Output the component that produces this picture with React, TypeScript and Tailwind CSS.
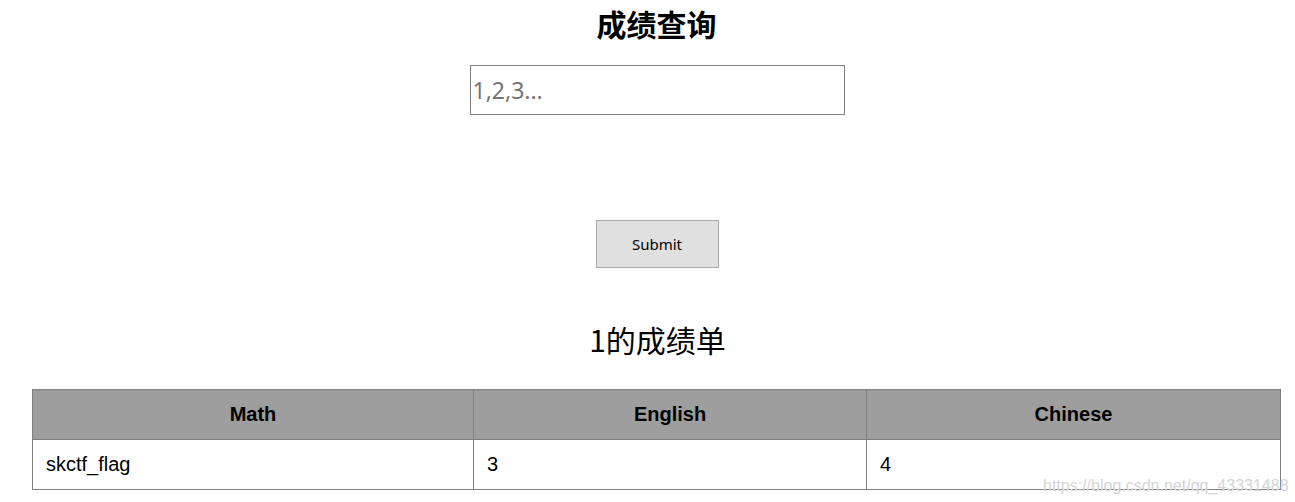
export default function App() {
  return (
    <div className="relative w-[1295px] h-[502px] bg-white overflow-hidden">
      <div className="flex flex-col items-center pl-[32px] pr-[14px]">
        <h1 className="mt-[3px] h-[40px] leading-[40px] text-[30px] font-bold text-black [font-family:'Noto_Sans_CJK_SC',sans-serif]">
          成绩查询
        </h1>
        <input
          className="mt-[22px] ml-[1px] w-[375px] h-[50px] border border-[#808080] px-[2px] text-[23px] text-black placeholder:text-[#757575] outline-none [font-family:'Noto_Sans','Noto_Sans_CJK_SC',sans-serif]"
          placeholder="1,2,3..."
        />
        <button className="mt-[105px] ml-[1px] w-[123px] h-[48px] bg-[#e0e0e0] border border-[#a9a9a9] text-[15px] text-black [font-family:'Noto_Sans',sans-serif]">
          Submit
        </button>
        <div className="mt-[51px] ml-[2px] h-[40px] leading-[40px] text-[30px] text-black [font-family:'Noto_Sans_CJK_SC',sans-serif]">
          1的成绩单
        </div>
        <table className="mt-[30px] w-full border-collapse border border-[#808080] text-[20px] text-black [font-family:'Liberation_Sans',Arial,sans-serif]">
          <thead>
            <tr className="bg-[#9e9e9e] h-[50px]">
              <th className="w-[441px] border border-[#808080] pb-[2px] font-bold text-center">Math</th>
              <th className="w-[393px] border border-[#808080] pb-[2px] font-bold text-center">English</th>
              <th className="border border-[#808080] pb-[2px] font-bold text-center">Chinese</th>
            </tr>
          </thead>
          <tbody>
            <tr className="h-[50px]">
              <td className="border border-[#808080] pl-[13px] pb-[2px] text-left">skctf_flag</td>
              <td className="border border-[#808080] pl-[13px] pb-[2px] text-left">3</td>
              <td className="border border-[#808080] pl-[13px] pb-[2px] text-left">4</td>
            </tr>
          </tbody>
        </table>
      </div>
      <div className="absolute left-[1043px] top-[474px] text-[16px] text-[#d4d4d4] whitespace-nowrap [font-family:'Liberation_Sans',Arial,sans-serif]">
        https://blog.csdn.net/qq_43331488
      </div>
    </div>
  );
}
